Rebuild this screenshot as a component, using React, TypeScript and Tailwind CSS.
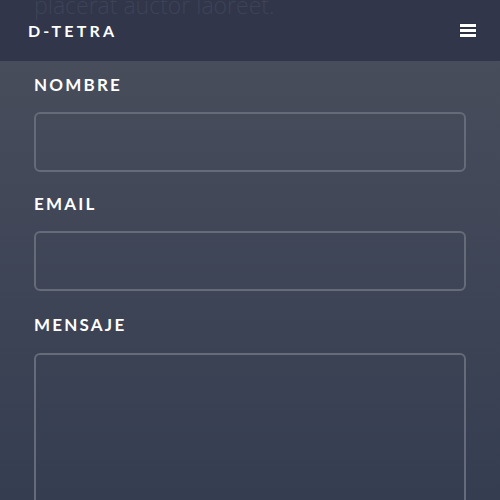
import React from 'react';

const fields = [
  { label: 'NOMBRE', tall: false },
  { label: 'EMAIL', tall: false },
  { label: 'MENSAJE', tall: true },
];

const App: React.FC = () => {
  return (
    <div className="relative h-[500px] w-[500px] overflow-hidden bg-gradient-to-b from-[#4a4f5c] to-[#353d51] font-['Lato',sans-serif]">
      <header className="absolute inset-x-0 top-0 z-10 flex h-[61px] items-center justify-between bg-[#31364a] pl-[28px] pr-[24px]">
        <p className="pointer-events-none absolute left-[34px] top-[-12px] font-['Open_Sans',sans-serif] text-[23px] font-light text-[#3e4358]">
          placerat auctor laoreet.
        </p>
        <span className="relative text-[16px] font-bold tracking-[0.2em] text-white">D-TETRA</span>
        <button className="relative flex flex-col gap-[2.5px]">
          <span className="block h-[2.5px] w-[16px] bg-white shadow-[0_0_1px_#111]" />
          <span className="block h-[2.5px] w-[16px] bg-white shadow-[0_0_1px_#111]" />
          <span className="block h-[2.5px] w-[16px] bg-white shadow-[0_0_1px_#111]" />
        </button>
      </header>

      <form className="flex flex-col gap-[22px] px-[34px] pt-[75px]">
        {fields.map((f) => (
          <div key={f.label} className={f.tall ? 'mt-[2px] flex flex-col gap-[18px]' : 'flex flex-col gap-[17px]'}>
            <label className="text-[17px] font-bold leading-[20px] tracking-[0.13em] text-white">{f.label}</label>
            {f.tall ? (
              <textarea className="h-[200px] w-full resize-none rounded-[6px] border-2 border-[#666b7a] bg-transparent" />
            ) : (
              <input className="h-[60px] w-full rounded-[6px] border-2 border-[#666b7a] bg-transparent" />
            )}
          </div>
        ))}
      </form>
    </div>
  );
};

export default App;
